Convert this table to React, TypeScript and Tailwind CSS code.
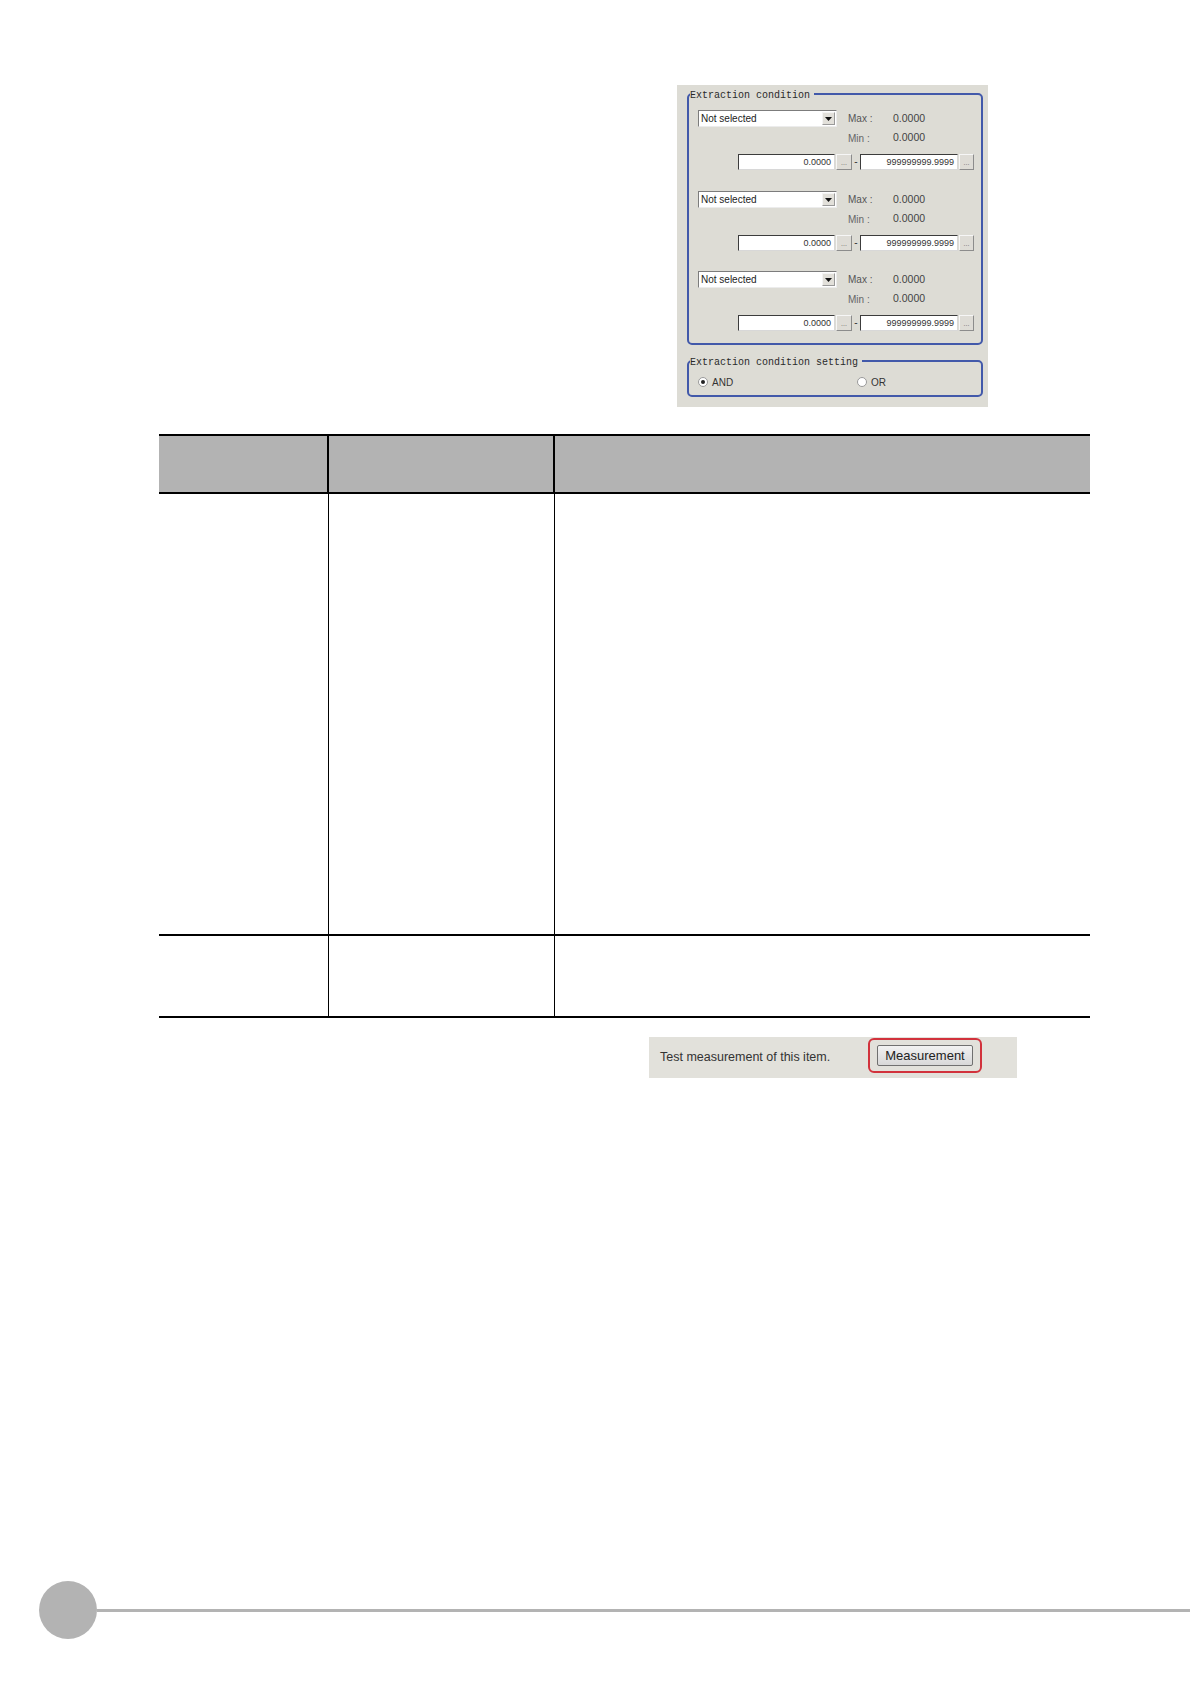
import React from "react";

const ui = "font-['Liberation_Sans',Arial,sans-serif]";
const mono = "font-['Liberation_Mono','DejaVu_Sans_Mono',monospace]";

function Dropdown() {
  return (
    <div className="flex h-[17px] w-[139px] items-center border border-t-[#7c7c7c] border-l-[#7c7c7c] border-r-[#ececec] border-b-[#ececec] bg-white">
      <span className="flex-1 pl-[2px] text-[10px] leading-none text-[#222]">Not selected</span>
      <div className="mr-[1px] flex h-[13px] w-[13px] items-center justify-center border border-t-[#f4f4f4] border-l-[#f4f4f4] border-r-[#9a9a9a] border-b-[#9a9a9a] bg-[#e2e0da]">
        <svg width="7" height="4" viewBox="0 0 7 4">
          <path d="M0 0 H7 L3.5 4 Z" fill="#111" />
        </svg>
      </div>
    </div>
  );
}

function NumBox({ value, width }: { value: string; width: string }) {
  return (
    <div
      className={`${width} flex h-[16px] items-center justify-end border border-t-[#3c3c3c] border-l-[#3c3c3c] border-r-[#d8d8d8] border-b-[#d8d8d8] bg-white pr-[3px] text-[9px] leading-none text-[#333]`}
    >
      {value}
    </div>
  );
}

function DotButton({ width }: { width: string }) {
  return (
    <div
      className={`${width} ml-[1px] flex h-[16px] items-end justify-center border border-t-[#f6f6f6] border-l-[#f6f6f6] border-r-[#8c8c8c] border-b-[#8c8c8c] bg-[#dedcd6] pb-[3px] text-[7px] leading-none text-[#666]`}
    >
      ...
    </div>
  );
}

function ConditionGroup() {
  return (
    <div className="flex h-[60px] flex-col">
      <div className="flex h-[17px] items-center">
        <Dropdown />
        <span className="ml-[11px] w-[45px] text-[10px] text-[#555]">Max :</span>
        <span className="text-[10.5px] text-[#444]">0.0000</span>
      </div>
      <div className="mt-[3px] flex h-[16px] items-center">
        <span className="ml-[150px] w-[45px] text-[10px] text-[#666]">Min :</span>
        <span className="text-[10.5px] text-[#444]">0.0000</span>
      </div>
      <div className="mt-[8px] flex h-[16px] items-center">
        <div className="ml-[40px]" />
        <NumBox value="0.0000" width="w-[97px]" />
        <DotButton width="w-[16px]" />
        <span className="w-[8px] text-center text-[10px] leading-none text-[#333]">-</span>
        <NumBox value="999999999.9999" width="w-[98px]" />
        <DotButton width="w-[15px]" />
      </div>
    </div>
  );
}

function Radio({ checked }: { checked?: boolean }) {
  return (
    <div className="flex h-[10px] w-[10px] items-center justify-center rounded-full border border-[#9a9a9a] bg-white">
      {checked && <div className="h-[4px] w-[4px] rounded-full bg-[#222]" />}
    </div>
  );
}

function ExtractionPanel() {
  return (
    <div className={`${ui} ml-[677px] mt-[85px] h-[322px] w-[311px] bg-[#dddcd5] pl-[10px] pt-[3px]`}>
      <fieldset className="w-[296px] rounded-[5px] border-2 border-[#4259aa]">
        <legend className={`${mono} ml-[1px] h-[12px] pr-[4px] text-[10px] leading-[16px] text-[#2a2a2a]`}>
          Extraction condition
        </legend>
        <div className="flex flex-col pb-[12px] pl-[9px] pt-[10px]">
          <ConditionGroup />
          <div className="h-[21px]" />
          <ConditionGroup />
          <div className="h-[20px]" />
          <ConditionGroup />
        </div>
      </fieldset>

      <fieldset className="mt-[10px] w-[296px] rounded-[5px] border-2 border-[#4259aa]">
        <legend className={`${mono} ml-[1px] h-[12px] pr-[4px] text-[10px] leading-[16px] text-[#2a2a2a]`}>
          Extraction condition setting
        </legend>
        <div className="flex h-[28px] items-center pb-[5px] pl-[9px] pt-[7px]">
          <div className="flex w-[159px] items-center">
            <Radio checked />
            <span className="ml-[4px] text-[10px] text-[#333]">AND</span>
          </div>
          <div className="flex items-center">
            <Radio />
            <span className="ml-[4px] text-[10px] text-[#333]">OR</span>
          </div>
        </div>
      </fieldset>
    </div>
  );
}

function SpecTable() {
  return (
    <div className="ml-[159px] mt-[27px] w-[931px]">
      {/* Header */}
      <div className="grid h-[60px] grid-cols-[170px_226px_535px] border-y-2 border-black bg-[#b3b3b3]">
        <div className="border-r-2 border-black" />
        <div className="border-r-2 border-black" />
        <div />
      </div>
      {/* Rows */}
      <div className="grid h-[442px] grid-cols-[170px_226px_535px] border-b-2 border-black">
        <div className="border-r border-black" />
        <div className="border-r border-black" />
        <div />
      </div>
      <div className="grid h-[82px] grid-cols-[170px_226px_535px] border-b-2 border-black">
        <div className="border-r border-black" />
        <div className="border-r border-black" />
        <div />
      </div>
    </div>
  );
}

function MeasurementStrip() {
  return (
    <div className={`${ui} ml-[649px] mt-[19px] flex h-[41px] w-[368px] items-center bg-[#e2e1db]`}>
      <span className="w-[219px] pl-[11px] text-[12.5px] text-[#333]">Test measurement of this item.</span>
      <div className="mb-[4px] flex h-[35px] w-[114px] items-center justify-center rounded-[6px] border-2 border-[#d2323c]">
        <div className="flex h-[21px] w-[96px] items-center justify-center rounded-[2px] border border-[#707070] bg-gradient-to-b from-[#f2f2f2] to-[#d8d8d8] text-[13px] text-[#222]">
          Measurement
        </div>
      </div>
    </div>
  );
}

export default function App() {
  return (
    <div className="flex h-[1684px] w-[1190px] flex-col overflow-hidden bg-white">
      <ExtractionPanel />
      <SpecTable />
      <MeasurementStrip />
      <div className="ml-[39px] mt-[503px] flex h-[58px] items-center">
        <div className="h-[58px] w-[58px] shrink-0 rounded-full bg-[#b3b3b3]" />
        <div className="h-[3px] flex-1 bg-[#b3b3b3]" />
      </div>
    </div>
  );
}
